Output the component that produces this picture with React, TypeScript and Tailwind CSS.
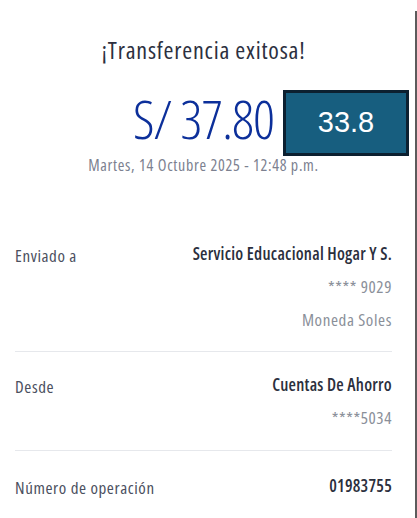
const rows = [
  {
    label: 'Enviado a',
    values: ['Servicio Educacional Hogar Y S.', '**** 9029', 'Moneda Soles'],
    pad: 'pt-4 pb-[15px]',
  },
  {
    label: 'Desde',
    values: ['Cuentas De Ahorro', '****5034'],
    pad: 'pt-[16px] pb-[16px]',
  },
  {
    label: 'Número de operación',
    values: ['01983755'],
    pad: 'pt-[18px] pb-4',
  },
];

export default function App() {
  return (
    <div className="flex min-h-[518px] bg-white font-['Open_Sans',sans-serif] [font-stretch:75%]">
      <div className="relative w-[407px] shrink-0">
        {/* Header */}
        <div className="flex flex-col items-center pt-[34px]">
          <h1 className="text-[24px] leading-[32px] font-medium tracking-[0.8px] text-[#2c3040]">
            ¡Transferencia exitosa!
          </h1>
          <div className="mt-[25px] text-[54px] leading-[54px] font-light tracking-[-1px] text-[#0c2f9a]">
            S/ 37.80
          </div>
          <div className="mt-[8px] text-[16px] leading-[24px] tracking-[0.7px] text-[#7c8190]">
            Martes, 14 Octubre 2025 - 12:48 p.m.
          </div>
        </div>

        {/* Badge overlay */}
        <div className="absolute left-[283px] top-[90px] flex h-[66px] w-[126px] items-center justify-center border-[3px] border-[#0c2030] bg-[#175e7f]">
          <span className="font-['Liberation_Sans',Arial,sans-serif] text-[29px] text-white [font-stretch:100%]">
            33.8
          </span>
        </div>

        {/* Detail rows */}
        <div className="mt-[44px] px-[15px]">
          {rows.map((row, i) => (
            <div
              key={row.label}
              className={`flex justify-between ${row.pad} ${
                i < rows.length - 1 ? 'border-b border-[#e6e8ec]' : ''
              }`}
            >
              <div className="mt-[2px] text-[17px] leading-[33px] tracking-[0.6px] text-[#4b5060]">
                {row.label}
              </div>
              <div className="flex flex-col items-end">
                {row.values.map((v, j) => (
                  <div
                    key={v}
                    className={`text-[17px] leading-[33px] ${
                      j === 0
                        ? 'font-semibold tracking-[0.25px] text-[#2b2f3d]'
                        : 'tracking-[0.6px] text-[#8a8f99]'
                    }`}
                  >
                    {v}
                  </div>
                ))}
              </div>
            </div>
          ))}
        </div>
      </div>
      <div className="w-[8px] shrink-0" />
      <div className="mt-[11px] w-[2px] shrink-0 bg-[#5c5c5c]" />
    </div>
  );
}
